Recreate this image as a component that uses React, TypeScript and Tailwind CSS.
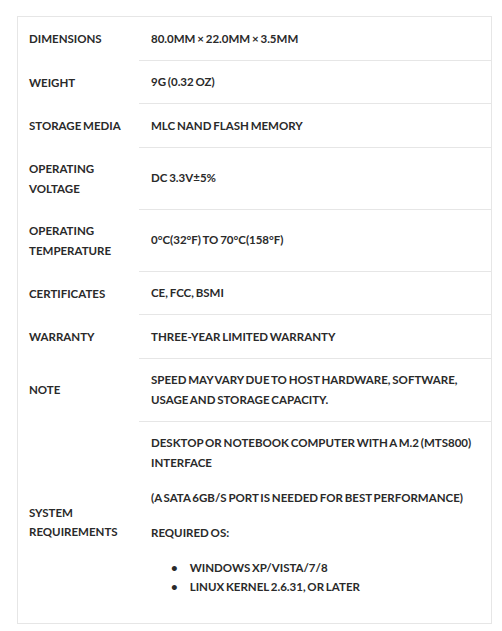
import React from "react"

type Spec = {
  label: string[]
  value: React.ReactNode
}

const specs: Spec[] = [
  { label: ["DIMENSIONS"], value: <p>80.0MM × 22.0MM × 3.5MM</p> },
  { label: ["WEIGHT"], value: <p>9G (0.32 OZ)</p> },
  { label: ["STORAGE MEDIA"], value: <p>MLC NAND FLASH MEMORY</p> },
  { label: ["OPERATING", "VOLTAGE"], value: <p>DC 3.3V±5%</p> },
  { label: ["OPERATING", "TEMPERATURE"], value: <p>0°C(32°F) TO 70°C(158°F)</p> },
  { label: ["CERTIFICATES"], value: <p>CE, FCC, BSMI</p> },
  { label: ["WARRANTY"], value: <p>THREE-YEAR LIMITED WARRANTY</p> },
  {
    label: ["NOTE"],
    value: (
      <p>
        SPEED MAY VARY DUE TO HOST HARDWARE, SOFTWARE,
        <br />
        USAGE AND STORAGE CAPACITY.
      </p>
    ),
  },
  {
    label: ["SYSTEM", "REQUIREMENTS"],
    value: (
      <div className="flex flex-col gap-[15.5px] pb-[15px]">
        <p>
          DESKTOP OR NOTEBOOK COMPUTER WITH A M.2 (MTS800)
          <br />
          INTERFACE
        </p>
        <p>(A SATA 6GB/S PORT IS NEEDED FOR BEST PERFORMANCE)</p>
        <p>REQUIRED OS:</p>
        <ul className="pl-[20px]">
          <li className="flex gap-[12px]">
            <span>•</span>
            <span>WINDOWS XP/VISTA/7/8</span>
          </li>
          <li className="flex gap-[12px]">
            <span>•</span>
            <span>LINUX KERNEL 2.6.31, OR LATER</span>
          </li>
        </ul>
      </div>
    ),
  },
]

export default function App() {
  return (
    <div className="min-h-[631px] bg-white px-[17px] pt-[16px] font-['Lato','Liberation_Sans',sans-serif] text-[11.5px] font-bold leading-[19.5px] whitespace-nowrap text-[#2a2a2a] [word-spacing:-1px]">
      <div className="w-[475px] border border-[#e6e6e6]">
        {specs.map((spec, i) => (
          <div key={i} className="flex">
            <div className="flex w-[121px] shrink-0 flex-col justify-center py-[11.5px] pl-[11px]">
              {spec.label.map((l) => (
                <span key={l}>{l}</span>
              ))}
            </div>
            <div
              className={`flex flex-1 flex-col justify-center py-[11.5px] pl-[12px] ${
                i < specs.length - 1 ? "border-b border-[#e6e6e6]" : ""
              }`}
            >
              {spec.value}
            </div>
          </div>
        ))}
      </div>
    </div>
  )
}
